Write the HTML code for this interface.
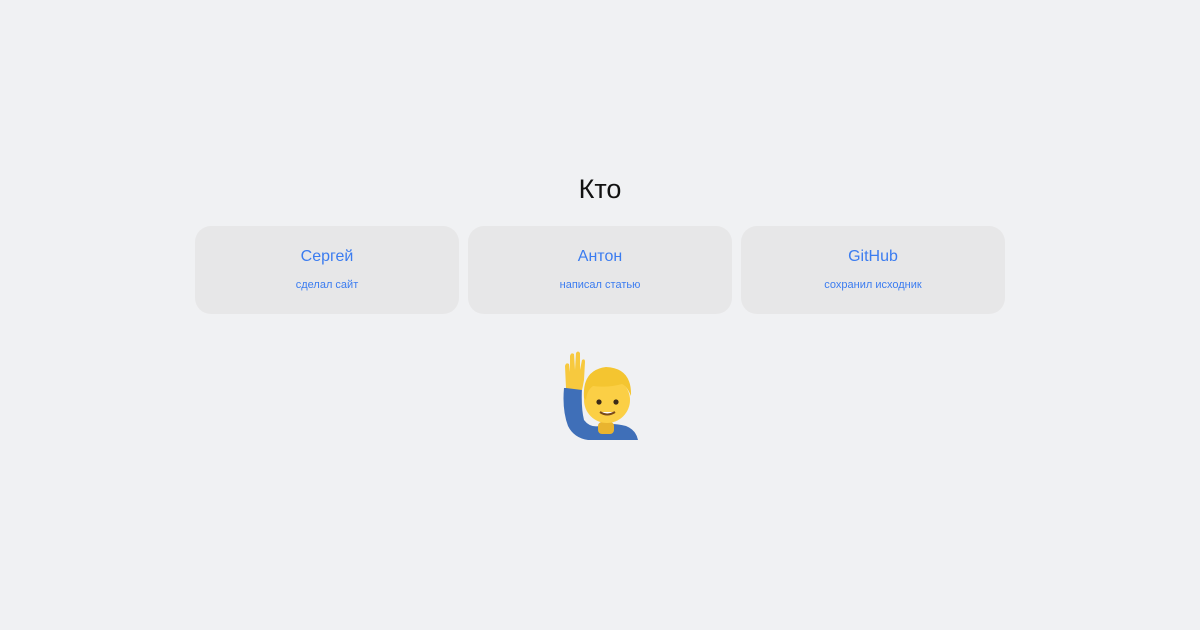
<!DOCTYPE html>
<html><head><meta charset="utf-8"><style>
html,body{margin:0;padding:0;width:1200px;height:630px;background:#f0f1f3;overflow:hidden;font-family:"Liberation Sans",Arial,sans-serif;}
h1{position:absolute;top:171px;left:0;width:1200px;text-align:center;margin:0;font-weight:400;font-size:27px;color:#111;line-height:36px;}
.card{position:absolute;top:226px;width:264px;height:88px;background:#e7e7e8;border-radius:16px;text-align:center;color:#3b7cf0;}
.card .t{position:absolute;top:21px;left:0;right:0;font-size:16px;line-height:20px;}
.card .s{position:absolute;top:52px;left:0;right:0;font-size:11px;line-height:14px;}
svg{position:absolute;left:560px;top:350px;}
</style></head><body>
<h1>Кто</h1>
<div class="card" style="left:195px"><div class="t">Сергей</div><div class="s">сделал сайт</div></div>
<div class="card" style="left:468px"><div class="t">Антон</div><div class="s">написал статью</div></div>
<div class="card" style="left:741px"><div class="t">GitHub</div><div class="s">сохранил исходник</div></div>
<svg width="80" height="92" viewBox="0 0 80 92">
<path d="M4 38 Q2 60 8 76 Q14 88 28 90 L78 90 Q76 80 66 76 Q50 72 40 76 Q30 78 24 70 Q21 58 22 38 Z" fill="#3f6fb8"/>
<path d="M6 38 L5 16 Q6 12 9 14 L10 22 L10 6 Q11 2 14 4 L15 20 L16 3 Q18 0 20 3 L20 20 L22 10 Q25 8 25 12 L24 30 Q23 36 22 40 Z" fill="#f7c93e"/>
<rect x="38" y="72" width="16" height="12" rx="4" fill="#e9b42f"/>
<circle cx="47" cy="50" r="23" fill="#fbcf45"/>
<path d="M24 48 Q22 20 46 17 Q72 18 71 46 Q67 36 62 34 Q48 38 33 36 Q27 40 26 50 Z" fill="#f4c530"/>
<circle cx="39" cy="52" r="2.6" fill="#3b2a18"/><circle cx="56" cy="52" r="2.6" fill="#3b2a18"/>
<path d="M40 62 Q47 67 55 62" stroke="#7a4a1a" stroke-width="2" fill="#fff"/>
</svg>
</body></html>
